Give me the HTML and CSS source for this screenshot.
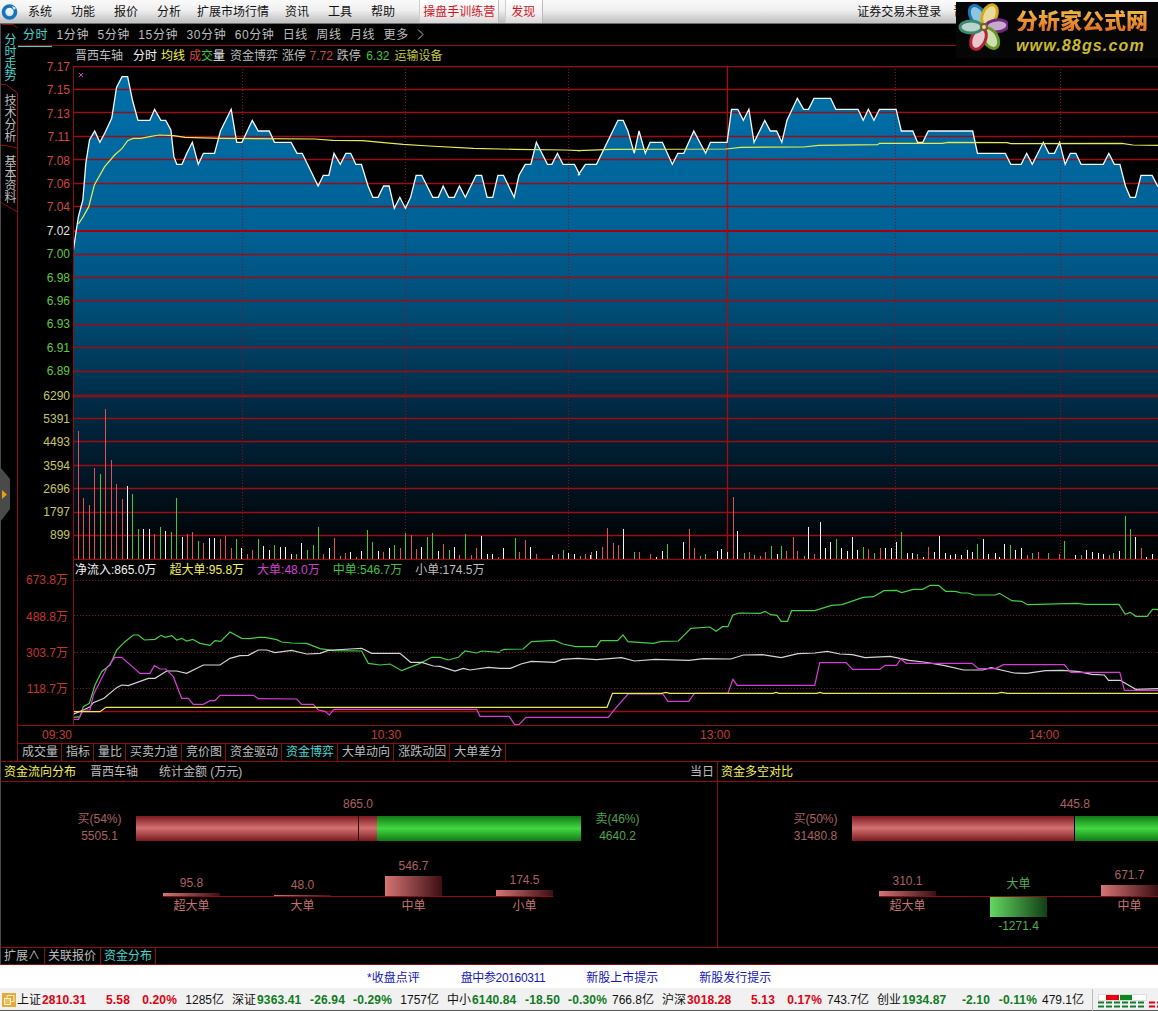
FILE: index.html
```html
<!DOCTYPE html>
<html lang="zh">
<head>
<meta charset="utf-8">
<title>分时走势</title>
<link rel="stylesheet" href="styles.css">
</head>
<body>
<div class="app">
  <header class="menu">
    <svg class="menu-logo" width="17" height="18" viewBox="0 0 17 18"><circle cx="8.5" cy="9" r="6" fill="none" stroke="#1673bd" stroke-width="3.6"/><circle cx="8.5" cy="9" r="2.6" fill="#dff1fb"/><path d="M11 3l4 2-2 2z" fill="#f4f4f4"/></svg>
    <nav class="menu-items">
      <span>系统</span><span>功能</span><span>报价</span><span>分析</span><span class="menu-wide">扩展市场行情</span><span>资讯</span><span>工具</span><span>帮助</span>
    </nav>
    <span class="menu-btn first">操盘手训练营</span>
    <span class="menu-btn second">发现</span>
    <span class="login">证券交易未登录</span>
    <span class="stock-hidden">晋西车轴</span>
    <div class="brand">
      <svg class="brand-flower" width="52" height="56" viewBox="0 0 52 56">
        <g transform="translate(28 25)">
          <ellipse class="pet" rx="7" ry="11" cy="-13" transform="rotate(-30)" fill="#8fc4e0" stroke="#1b76b8"/>
          <ellipse class="pet" rx="7" ry="11" cy="-13" transform="rotate(25)" fill="#e8dc9c" stroke="#d8a81c"/>
          <ellipse class="pet" rx="6" ry="11" cy="-13" transform="rotate(85)" fill="#c8a8cc" stroke="#6d2a7c"/>
          <ellipse class="pet" rx="7" ry="11" cy="-13" transform="rotate(150)" fill="#cfe0b0" stroke="#6a9824"/>
          <ellipse class="pet" rx="7" ry="11" cy="-13" transform="rotate(205)" fill="#e8c8cc" stroke="#b02838"/>
          <ellipse class="pet" rx="6" ry="11" cy="-13" transform="rotate(270)" fill="#b8d4cc" stroke="#3a8a70"/>
          <circle r="4" fill="#7a5a30"/><circle r="2" fill="#e8d8a0"/>
        </g>
      </svg>
      <div class="brand-text">
        <div class="brand-cn">分析家公式网</div>
        <div class="brand-url">www.88gs.com</div>
      </div>
    </div>
  </header>

  <div class="body-row">
    <aside class="sidetabs">
      <svg class="side-lines" width="18" height="737" viewBox="0 0 18 737"><path class="side-path" d="M2 .5H13L17.5 4M1 60.5H6L17.5 69V737M1 121.5H6L17.5 124M1 178.5L17.5 188"/></svg>
      <span class="side-tab on">分时走势</span>
      <span class="side-tab">技术分析</span>
      <span class="side-tab">基本资料</span>
      <svg class="side-handle" width="11" height="56" viewBox="0 0 11 56"><path d="M0 0L10 12V42L0 55z" fill="#4a4a4a"/><path d="M2 23l5 4.500-5 4.500z" fill="#e8a010"/></svg>
    </aside>

    <main class="content">
      <div class="periods">
        <span class="on">分时</span><span>1分钟</span><span>5分钟</span><span>15分钟</span><span>30分钟</span><span>60分钟</span><span>日线</span><span>周线</span><span>月线</span><span>更多</span>
        <svg class="more" width="7" height="11" viewBox="0 0 7 11"><path d="M1 .5L6 5.500 1 10.500" fill="none" stroke="#bdbdbd"/></svg>
      </div>
      <div class="titlebar">
        <span class="t-stock">晋西车轴</span>
        <span class="white">分时</span>
        <span class="yellow">均线</span>
        <span><b class="red">成</b><b class="green">交</b><b class="white">量</b></span>
        <span class="t-cap">资金博弈</span>
        <span>涨停 <b class="red">7.72</b></span>
        <span>跌停 <b class="green t-down">6.32</b></span>
        <span class="olive t-cap">运输设备</span>
      </div>

      <section class="chart-row">
        <div class="axis">
          <div class="axis-list">
            <span class="red">7.17</span><span class="red">7.15</span><span class="red">7.13</span><span class="red">7.11</span><span class="red">7.08</span><span class="red">7.06</span><span class="red">7.04</span><span class="white2">7.02</span><span class="lime">7.00</span><span class="lime">6.98</span><span class="lime">6.96</span><span class="lime">6.93</span><span class="lime">6.91</span><span class="lime">6.89</span>
          </div>
          <div class="axis-vol">
            <span>6290</span><span>5391</span><span>4493</span><span>3594</span><span>2696</span><span>1797</span><span>899</span>
          </div>
        </div>
        <svg class="plot" width="1084" height="494" viewBox="74 66 1084 494">
          <defs>
            <linearGradient id="fillArea" gradientUnits="userSpaceOnUse" x1="0" y1="228" x2="0" y2="1677">
              <stop offset="0" stop-color="#0070a9"/><stop offset=".32" stop-color="#006195"/><stop offset=".5" stop-color="#004a72"/><stop offset=".68" stop-color="#012a44"/><stop offset="1" stop-color="#000"/>
            </linearGradient>
          </defs>
          <g transform="scale(.36990 .33333)">
            <polygon fill="url(#fillArea)" points="197,1677 197,762 205,700 212,650 224,600 232,490 242,420 256,393 270,427 283,400 302,355 315,262 330,230 345,230 358,300 373,361 405,361 418,328 435,361 448,361 462,390 470,470 478,493 492,493 505,460 520,427 536,493 550,460 580,460 596,393 625,328 640,427 654,427 682,361 698,393 728,393 742,427 787,427 803,460 817,460 860,558 874,526 889,526 903,460 920,493 935,460 948,460 962,493 977,493 995,558 1008,592 1022,592 1037,558 1052,558 1066,625 1081,592 1096,625 1110,592 1125,526 1140,526 1170,592 1185,592 1198,558 1213,592 1228,592 1242,558 1258,592 1287,526 1302,526 1317,592 1332,592 1346,526 1361,526 1390,592 1403,526 1420,493 1435,493 1450,427 1480,493 1492,493 1507,460 1522,493 1553,493 1568,526 1568,1677"/>
          </g>
          <g transform="translate(578 0) scale(.36990 .33333)">
            <polygon fill="url(#fillArea)" points="-2,1677 -2,526 0,526 20,493 50,493 108,361 122,361 135,393 152,460 165,393 182,460 195,427 228,427 255,493 270,460 286,460 313,393 345,460 358,427 403,427 415,328 432,328 447,361 462,328 476,427 505,361 520,393 537,393 551,427 565,361 593,295 610,328 623,328 638,295 683,295 697,328 757,328 771,361 785,328 800,361 815,328 860,328 874,393 905,393 918,427 932,427 947,393 1067,393 1080,460 1155,460 1170,493 1198,493 1213,460 1228,493 1258,427 1273,460 1288,460 1302,427 1317,493 1331,460 1346,460 1360,493 1420,493 1435,460 1450,493 1465,493 1480,558 1493,592 1507,592 1522,526 1552,526 1568,560 1568,1677"/>
          </g>
          <path class="grid" d="M74 66.500H1158M74 89.500H1158M74 112.500H1158M74 136.500H1158M74 159.500H1158M74 183.500H1158M74 206.500H1158M74 254.500H1158M74 277.500H1158M74 300.500H1158M74 324.500H1158M74 347.500H1158M74 371.500H1158M74 418.500H1158M74 441.500H1158M74 465.500H1158M74 488.500H1158M74 512.500H1158M74 535.500H1158M74 559.500H1158"/>
          <path class="grid-thick" d="M74 231H1158"/>
          <path class="grid-band" d="M74 396H1158"/>
          <path class="grid-dot" d="M242.500 66V559M405.500 66V559M568.500 66V559M895.500 66V559M1060.500 66V559"/>
          <path class="grid-solid" d="M727.500 66V559"/>
          <g transform="scale(.36990 .33333)">
            <polyline class="l-price" points="197,762 205,700 212,650 224,600 232,490 242,420 256,393 270,427 283,400 302,355 315,262 330,230 345,230 358,300 373,361 405,361 418,328 435,361 448,361 462,390 470,470 478,493 492,493 505,460 520,427 536,493 550,460 580,460 596,393 625,328 640,427 654,427 682,361 698,393 728,393 742,427 787,427 803,460 817,460 860,558 874,526 889,526 903,460 920,493 935,460 948,460 962,493 977,493 995,558 1008,592 1022,592 1037,558 1052,558 1066,625 1081,592 1096,625 1110,592 1125,526 1140,526 1170,592 1185,592 1198,558 1213,592 1228,592 1242,558 1258,592 1287,526 1302,526 1317,592 1332,592 1346,526 1361,526 1390,592 1403,526 1420,493 1435,493 1450,427 1480,493 1492,493 1507,460 1522,493 1553,493 1568,526"/>
            <polyline class="l-avg" points="212,672 225,650 240,620 255,555 283,500 310,465 330,445 345,422 360,415 380,415 405,410 430,405 470,407 500,412 600,415 850,417 900,421 980,422 1030,427 1090,433 1160,438 1280,445 1390,448 1530,450 1568,452"/>
          </g>
          <g transform="translate(578 0) scale(.36990 .33333)">
            <polyline class="l-price" points="0,526 20,493 50,493 108,361 122,361 135,393 152,460 165,393 182,460 195,427 228,427 255,493 270,460 286,460 313,393 345,460 358,427 403,427 415,328 432,328 447,361 462,328 476,427 505,361 520,393 537,393 551,427 565,361 593,295 610,328 623,328 638,295 683,295 697,328 757,328 771,361 785,328 800,361 815,328 860,328 874,393 905,393 918,427 932,427 947,393 1067,393 1080,460 1155,460 1170,493 1198,493 1213,460 1228,493 1258,427 1273,460 1288,460 1302,427 1317,493 1331,460 1346,460 1360,493 1420,493 1435,460 1450,493 1465,493 1480,558 1493,592 1507,592 1522,526 1552,526 1568,560"/>
            <polyline class="l-avg" points="0,452 90,448 400,447 440,442 610,441 650,436 810,434 815,430 985,430 1000,427 1160,428 1170,431 1470,430 1500,435 1568,436"/>
          </g>
          <path class="mark" d="M79 73l4 4M83 73l-4 4"/>
          <path class="v-red" d="M78.500 559V431M83.500 559V498M89.500 559V505M94.500 559V468M105.500 559V409M111.500 559V460M116.500 559V484M122.500 559V499M154.500 559V534M187.500 559V534M192.500 559V532M203.500 559V543M220.500 559V539M225.500 559V536M231.500 559V548M247.500 559V554M252.500 559V550M323.500 559V554M334.500 559V538M345.500 559V553M383.500 559V552M400.500 559V548M411.500 559V535M416.500 559V549M443.500 559V544M459.500 559V555M471.500 559V555M476.500 559V548M498.500 559V557M519.500 559V552M525.500 559V540M536.500 559V554M558.500 559V554M585.500 559V554M591.500 559V552M602.500 559V547M607.500 559V528M613.500 559V543M618.500 559V545M639.500 559V552M650.500 559V554M689.500 559V529M694.500 559V548M733.500 559V497M749.500 559V552M760.500 559V556M765.500 559V552M786.500 559V551M793.500 559V537M797.500 559V551M814.500 559V554M868.500 559V549M880.500 559V548M928.500 559V547M1027.500 559V555M1038.500 559V552M1059.500 559V554M1109.500 559V555M1141.500 559V548"/>
          <path class="v-green" d="M100.500 559V474M132.500 559V494M138.500 559V529M160.500 559V527M171.500 559V532M176.500 559V498M198.500 559V541M236.500 559V539M258.500 559V539M274.500 559V545M296.500 559V554M307.500 559V550M313.500 559V545M318.500 559V527M340.500 559V556M356.500 559V557M367.500 559V530M372.500 559V542M394.500 559V545M405.500 559V533M427.500 559V537M432.500 559V533M449.500 559V550M465.500 559V534M515.500 559V538M563.500 559V550M580.500 559V556M634.500 559V552M667.500 559V544M700.500 559V556M705.500 559V554M744.500 559V553M754.500 559V555M771.500 559V546M781.500 559V546M804.500 559V556M836.500 559V539M863.500 559V547M874.500 559V553M901.500 559V532M917.500 559V554M977.500 559V544M1010.500 559V545M1032.500 559V553M1048.500 559V553M1064.500 559V541M1081.500 559V555M1113.500 559V553M1125.500 559V516M1130.500 559V529"/>
          <path class="v-white" d="M127.500 559V486M143.500 559V529M149.500 559V529M165.500 559V531M182.500 559V537M209.500 559V538M214.500 559V538M241.500 559V548M263.500 559V546M269.500 559V550M280.500 559V547M285.500 559V547M291.500 559V554M301.500 559V543M329.500 559V548M350.500 559V552M361.500 559V551M378.500 559V551M389.500 559V548M421.500 559V547M438.500 559V551M454.500 559V547M481.500 559V536M487.500 559V554M492.500 559V554M503.500 559V548M530.500 559V547M552.500 559V555M568.500 559V553M574.500 559V554M590.500 559V555M596.500 559V551M623.500 559V529M656.500 559V557M662.500 559V551M683.500 559V542M717.500 559V551M721.500 559V549M727.500 559V552M737.500 559V531M777.500 559V554M808.500 559V527M820.500 559V522M825.500 559V548M830.500 559V542M841.500 559V548M847.500 559V551M852.500 559V537M857.500 559V550M885.500 559V548M891.500 559V548M896.500 559V542M907.500 559V553M912.500 559V553M923.500 559V557M934.500 559V552M939.500 559V536M945.500 559V553M950.500 559V555M955.500 559V554M961.500 559V555M967.500 559V550M972.500 559V552M983.500 559V539M988.500 559V554M995.500 559V553M999.500 559V557M1004.500 559V544M1015.500 559V550M1021.500 559V548M1075.500 559V555M1086.500 559V550M1092.500 559V552M1098.500 559V553M1103.500 559V554M1119.500 559V551M1135.500 559V537M1146.500 559V557M1152.500 559V554"/>
        </svg>
      </section>

      <section class="legend-row">
        <div class="axis-empty"></div>
        <div class="legend">
          <span class="white">净流入:865.0万</span>
          <span class="yellow">超大单:95.8万</span>
          <span class="magenta">大单:48.0万</span>
          <span class="green">中单:546.7万</span>
          <span>小单:174.5万</span>
        </div>
      </section>

      <section class="flow-row">
        <div class="axis">
          <div class="axis-flow"><span>673.8万</span><span>488.8万</span><span>303.7万</span><span>118.7万</span></div>
        </div>
        <svg class="plot" width="1084" height="147" viewBox="74 578 1084 147">
          <path class="flow-dot" d="M74 580.500H1158M74 615.500H1158M74 652.500H1158M74 688.500H1158"/>
          <path class="grid" d="M74 711.500H1158"/>
          <g transform="translate(0 570) scale(.33333)">
            <polyline class="f-green" points="222,442 240,440 250,410 268,400 285,345 305,305 330,285 350,240 375,215 400,195 415,195 433,210 465,208 483,196 495,202 515,197 530,210 545,205 560,213 578,208 600,220 630,226 645,212 662,214 690,186 725,205 750,206 775,202 795,202 830,209 845,216 875,219 920,220 960,236 1000,242 1085,243 1105,280 1140,285 1170,282 1205,302 1260,280 1295,262 1320,262 1345,270 1375,262 1395,243 1430,249 1445,243 1500,247"/>
            <polyline class="f-white" points="222,432 250,420 270,410 280,398 312,385 350,353 365,345 385,347 445,325 465,325 500,303 530,303 560,310 610,285 660,285 690,265 720,257 745,256 775,240 800,240 825,248 875,241 920,252 960,250 985,241 1050,237 1085,235 1115,250 1200,250 1232,277 1265,277 1300,288 1320,289 1365,303 1390,295 1410,300 1465,292 1500,295"/>
            <polyline class="f-mag" points="222,448 235,448 250,420 270,420 280,375 320,295 345,262 365,262 420,310 450,310 463,287 480,297 497,297 520,320 545,385 565,385 580,403 610,403 630,392 645,392 660,376 760,376 775,386 890,387 905,403 940,403 955,420 975,424 988,435 1002,418 1430,418 1440,439 1500,439"/>
            <polyline class="f-yellow" points="222,425 300,425 318,412 1500,412"/>
          </g>
          <g transform="translate(500 570) scale(.41964 .33333)">
            <polyline class="f-green" points="0,243 10,238 55,237 75,215 130,211 150,222 180,230 230,230 240,212 280,212 293,195 305,215 365,220 385,214 425,213 455,175 500,171 515,184 530,170 543,170 555,135 570,129 620,130 632,124 645,134 660,136 670,154 685,154 695,122 750,122 790,106 815,104 865,82 890,80 915,62 945,61 957,68 985,58 1007,58 1025,46 1045,46 1062,64 1085,64 1100,69 1115,69 1130,75 1180,75 1190,70 1220,92 1243,94 1257,104 1375,100 1395,103 1475,103 1490,133 1502,127 1515,139 1542,139 1555,118 1568,118"/>
            <polyline class="f-white" points="0,295 25,295 50,282 75,274 130,277 148,268 185,265 230,269 290,263 320,273 370,268 450,271 485,266 550,267 580,255 625,254 670,263 710,251 750,249 780,244 810,252 840,254 870,263 930,259 975,271 1010,276 1060,287 1105,300 1150,300 1170,293 1225,309 1255,310 1300,302 1340,301 1380,305 1410,313 1440,315 1450,331 1478,331 1515,358 1568,356"/>
            <polyline class="f-mag" points="0,439 22,439 35,464 45,464 62,442 258,442 275,415 305,372 388,372 400,394 450,394 463,370 543,370 555,328 565,346 750,346 762,278 825,278 840,298 905,298 918,286 945,286 955,267 968,280 1125,280 1140,296 1180,296 1200,284 1345,284 1360,307 1477,307 1488,361 1568,361"/>
            <polyline class="f-yellow" points="0,412 255,412 268,370 385,370 395,367 405,370 650,370 658,367 665,370 755,370 762,367 770,370 1185,370 1195,367 1210,370 1568,370"/>
          </g>
        </svg>
      </section>

      <div class="times"><span>09:30</span><span>10:30</span><span>13:00</span><span>14:00</span></div>

      <div class="subtabs">
        <span>成交量</span><span>指标</span><span>量比</span><span>买卖力道</span><span>竞价图</span><span>资金驱动</span><span class="on">资金博弈</span><span>大单动向</span><span>涨跌动因</span><span>大单差分</span>
      </div>
    </main>
  </div>

  <section class="panes">
    <article class="pane pane-left">
      <div class="pane-head">
        <span class="yellow">资金流向分布</span>
        <span class="ph-stock">晋西车轴</span>
        <span class="ph-stat">统计金额 (万元)</span>
        <span class="ph-day">当日</span>
      </div>
      <div class="gauge">
        <div class="g-side rose g-buy"><div>买(54%)</div><div>5505.1</div></div>
        <div class="g-main">
          <div class="g-val rose g-val-a">865.0</div>
          <div class="g-bar"><i class="seg-red seg-a"></i><i class="seg-red seg-b"></i><i class="seg-green"></i></div>
        </div>
        <div class="g-side g-sell"><div>卖(46%)</div><div>4640.2</div></div>
      </div>
      <div class="mini mini-a">
        <div class="mini-up">
          <div class="m-col"><span class="m-v rose">95.8</span><i class="m-bar m-red" style="height:3px"></i></div>
          <div class="m-col"><span class="m-v rose">48.0</span><i class="m-bar m-red" style="height:1px"></i></div>
          <div class="m-col"><span class="m-v rose">546.7</span><i class="m-bar m-red" style="height:20px"></i></div>
          <div class="m-col"><span class="m-v rose">174.5</span><i class="m-bar m-red" style="height:6px"></i></div>
        </div>
        <div class="mini-down">
          <div class="m-col"><span class="m-l pink">超大单</span></div>
          <div class="m-col"><span class="m-l pink">大单</span></div>
          <div class="m-col"><span class="m-l pink">中单</span></div>
          <div class="m-col"><span class="m-l pink">小单</span></div>
        </div>
      </div>
    </article>
    <article class="pane pane-right">
      <div class="pane-head"><span class="yellow">资金多空对比</span></div>
      <div class="gauge gauge-r">
        <div class="g-side rose g-buy"><div>买(50%)</div><div>31480.8</div></div>
        <div class="g-main">
          <div class="g-val rose g-val-b">445.8</div>
          <div class="g-bar"><i class="seg-red seg-c"></i><i class="seg-green"></i></div>
        </div>
      </div>
      <div class="mini mini-b">
        <div class="mini-up">
          <div class="m-col"><span class="m-v rose">310.1</span><i class="m-bar m-red" style="height:5px"></i></div>
          <div class="m-col"><span class="m-l sage">大单</span></div>
          <div class="m-col"><span class="m-v rose">671.7</span><i class="m-bar m-red" style="height:11px"></i></div>
        </div>
        <div class="mini-down">
          <div class="m-col"><span class="m-l pink">超大单</span></div>
          <div class="m-col"><i class="m-bar m-green" style="height:20px"></i><span class="m-l sage">-1271.4</span></div>
          <div class="m-col"><span class="m-l pink">中单</span></div>
        </div>
      </div>
    </article>
  </section>

  <div class="exttabs"><span>扩展∧</span><span>关联报价</span><span class="on">资金分布</span></div>

  <div class="links"><span>*收盘点评</span><span class="tight">盘中参20160311</span><span>新股上市提示</span><span>新股发行提示</span></div>

  <footer class="status">
    <svg class="st-icon" width="14" height="14" viewBox="0 0 14 14"><rect width="14" height="14" fill="#e9a93a"/><rect x="5" y="2.500" width="7" height="6" fill="none" stroke="#fff3cf"/><rect x="2.500" y="5.500" width="6" height="6" fill="#f0c060" stroke="#fff3cf"/></svg>
    <div class="idx"><span class="i-n">上证</span><b class="i-p up">2810.31</b><b class="i-c up">5.58</b><b class="i-r up">0.20%</b><span class="i-a">1285亿</span></div>
    <div class="idx"><span class="i-n">深证</span><b class="i-p dn">9363.41</b><b class="i-c dn">-26.94</b><b class="i-r dn">-0.29%</b><span class="i-a">1757亿</span></div>
    <div class="idx"><span class="i-n">中小</span><b class="i-p dn">6140.84</b><b class="i-c dn">-18.50</b><b class="i-r dn">-0.30%</b><span class="i-a">766.8亿</span></div>
    <div class="idx"><span class="i-n">沪深</span><b class="i-p up">3018.28</b><b class="i-c up">5.13</b><b class="i-r up">0.17%</b><span class="i-a">743.7亿</span></div>
    <div class="idx"><span class="i-n">创业</span><b class="i-p dn">1934.87</b><b class="i-c dn">-2.10</b><b class="i-r dn">-0.11%</b><span class="i-a">479.1亿</span></div>
    <svg class="st-bars" width="66" height="22" viewBox="0 0 66 22"><path d="M.5 0V22" stroke="#bbb" fill="none"/><rect x="6.500" y="5.500" width="48" height="6" fill="#fff" stroke="#ddd"/><rect x="14" y="6" width="13" height="5" fill="#e60012"/><rect x="28" y="6" width="12" height="5" fill="#0a8a1e"/><path d="M6 13.500H54M6 17.500H54" stroke="#127a2a" stroke-width="2" stroke-dasharray="6 2" fill="none"/><path d="M57 13.500H66M57 17.500H66" stroke="#e60012" stroke-width="2" stroke-dasharray="6 2" fill="none"/></svg>
  </footer>
</div>
</body>
</html>
```

FILE: styles.css
```css
* { box-sizing: border-box; }
html, body { margin: 0; padding: 0; background: #000; }
.app {
  width: 1158px; height: 1011px; overflow: hidden; position: relative;
  font: 12px/1 "Liberation Sans", "Noto Sans CJK SC", sans-serif;
  color: #bdbdbd; background: #000;
}
b, i { font-weight: normal; font-style: normal; }
.red { color: #d24444; }
.green { color: #3fc43f; }
.white { color: #f2f2f2; }
.white2 { color: #e0e0e0; }
.yellow { color: #f2f24a; }
.olive { color: #c0c83a; }
.lime { color: #62c83c; }
.magenta { color: #d83cd8; }
.rose { color: #ac6060; }
.pink { color: #c87272; }
.sage { color: #4fae4f; }

/* menu */
.menu {
  position: relative; height: 24px; display: flex; align-items: center; color: #111;
  background: linear-gradient(#fafafa, #efefef 45%, #c4c4c4 92%);
  border-bottom: 1px solid #6e6e6e; padding-left: 1px;
}
.menu-logo { flex: none; }
.menu-items { display: flex; gap: 19px; margin-left: 10px; }
.menu-wide { margin: 0 -3px; }
.menu-btn { height: 23px; display: flex; align-items: center; color: #d8141e; background: linear-gradient(#fff, #f0f0f0 60%, #d8d8d8); border-left: 1px solid #cfcfcf; border-right: 1px solid #bbb; }
.menu-btn.first { margin-left: 24px; padding: 0 3px; }
.menu-btn.second { margin-left: 6px; padding: 0 7px 0 5px; }
.login { margin-left: 314px; }
.stock-hidden { margin-left: 12px; white-space: nowrap; }
.brand {
  position: absolute; left: 956px; top: 2px; width: 202px; height: 56px;
  background: #060606; display: flex; z-index: 3;
}
.brand-flower { flex: none; }
.pet { stroke-width: 3; }
.brand-text { margin: 5px 0 0 8px; }
.brand-cn {
  font: 900 22px/24px "Noto Sans CJK SC", sans-serif; white-space: nowrap;
  background: linear-gradient(#f3c34a, #df6f22); -webkit-background-clip: text; background-clip: text; color: transparent;
}
.brand-url { margin-top: 6px; font: italic 700 16px/18px "Liberation Sans", sans-serif; letter-spacing: 1.150px; color: #c9bb2a; }

/* side tabs */
.body-row { display: flex; height: 737px; }
.sidetabs { position: relative; flex: none; width: 18px; display: flex; flex-direction: column; gap: 13px; padding: 9px 0 0 2px; border-left: 1px solid #4a4a4a; }
.side-lines { position: absolute; left: -1px; top: 0; }
.side-path { fill: none; stroke: #8f0d12; }
.side-tab { position: relative; writing-mode: vertical-rl; line-height: 12px; letter-spacing: 0; width: 12px; }
.side-tab.on { color: #3fd8d0; }
.side-handle { position: absolute; left: -1px; top: 443px; }

/* right content */
.content { flex: 1; min-width: 0; }
.periods { height: 22px; display: flex; align-items: center; gap: 8.400px; padding-left: 5px; letter-spacing: .6px; border-bottom: 1px solid #8f0d12; position: relative; }
.periods .on { color: #3fd8d0; position: relative; }
.periods .on::after { content: ""; position: absolute; left: -5px; right: -4px; bottom: -6px; height: 1px; background: #3fd8d0; }
.more { flex: none; }
.titlebar { height: 20px; display: flex; align-items: center; gap: 4px; padding-left: 57px; white-space: nowrap; }
.t-stock { margin-right: 6px; }
.t-cap { margin-left: 1px; }
.t-down { margin-left: 2px; }
.chart-row, .flow-row { display: flex; }
.chart-row { height: 494px; }
.axis { flex: none; width: 56px; border-right: 1px solid #8f0d12; text-align: right; padding-right: 3px; }
.axis span { display: block; }
.axis-list { margin-top: -10px; }
.axis-list span { height: 23.400px; line-height: 23.400px; }
.axis-vol { margin-top: 1.500px; color: #c6c65a; }
.axis-vol span { height: 23.200px; line-height: 23.200px; }
.plot { display: block; flex: none; }
.grid { fill: none; stroke: #9c0c12; stroke-width: 1.300; }
.grid-thick { fill: none; stroke: #a80008; stroke-width: 2.200; }
.grid-band { fill: none; stroke: #7c151c; stroke-width: 3; }
.grid-dot { fill: none; stroke: #8a1015; stroke-width: 1; stroke-dasharray: 1 2; }
.grid-solid { fill: none; stroke: #a80a10; stroke-width: 1.300; }
.l-price { fill: none; stroke: #f4f8fa; stroke-width: 1.300; vector-effect: non-scaling-stroke; }
.l-avg { fill: none; stroke: #e6ea50; stroke-width: 1.200; vector-effect: non-scaling-stroke; }
.mark { fill: none; stroke: #d83cd8; stroke-width: 1; }
.v-red, .v-green, .v-white { fill: none; stroke-width: 1; }
.v-red { stroke: #e05252; }
.v-green { stroke: #3cc83c; }
.v-white { stroke: #f4f4f4; }

.legend-row { display: flex; height: 18px; }
.axis-empty { flex: none; width: 56px; border-right: 1px solid #8f0d12; }
.legend { display: flex; align-items: center; gap: 13px; padding: 1px 0 0 1px; white-space: nowrap; }

.flow-row { height: 148px; border-bottom: 1px solid #900c12; }
.axis-flow { margin-top: -15.700px; color: #c83434; padding-right: 2px; }
.axis-flow span { height: 36.400px; line-height: 36.400px; }
.flow-dot { fill: none; stroke: #7e1217; stroke-dasharray: 1 2; }
.f-green, .f-white, .f-mag, .f-yellow { fill: none; stroke-width: 1.200; vector-effect: non-scaling-stroke; }
.f-green { stroke: #45d045; }
.f-white { stroke: #d4d4d4; }
.f-mag { stroke: #d83cd8; }
.f-yellow { stroke: #eaea50; }

.times { height: 17px; display: flex; align-items: center; gap: 299px; padding-left: 24px; color: #c83a3a; }

.subtabs { height: 18px; display: flex; border-top: 1px solid #900c12; }
.subtabs span { padding: 0 3px 0 4px; border-right: 1px solid #900c12; line-height: 17px; white-space: nowrap; }
.subtabs .on { color: #3fd8d0; }

/* panes */
.panes { display: flex; height: 186px; border-top: 1px solid #900c12; border-left: 1px solid #4a4a4a; }
.pane { overflow: hidden; }
.pane-left { flex: none; width: 717px; border-right: 1px solid #900c12; }
.pane-right { flex: 1; min-width: 0; }
.pane-head { height: 20px; border-bottom: 1px solid #900c12; display: flex; align-items: center; padding: 0 3px; white-space: nowrap; }
.ph-stock { margin-left: 14px; }
.ph-stat { margin-left: 21px; }
.ph-day { margin-left: auto; }
.gauge { display: flex; height: 46px; margin-top: 14px; padding-left: 76px; }
.gauge-r { padding-left: 75px; }
.g-side { flex: none; width: 45px; padding-top: 15px; text-align: center; white-space: nowrap; line-height: 17px; }
.g-sell { color: #4fa44f; margin-left: 14px; }
.g-main { flex: none; width: 445px; margin-left: 14px; }
.g-val { height: 20px; line-height: 16px; }
.g-val-a { margin-left: 207px; }
.g-val-b { margin-left: 208px; }
.g-bar { display: flex; height: 25px; }
.seg-red { display: block; background: linear-gradient(#7a1a20, #d47070 48%, #7a1a20); }
.seg-a { width: 223px; border-right: 1px solid #200; }
.seg-b { width: 18px; }
.seg-c { width: 223px; border-right: 1px solid #000; }
.seg-green { display: block; flex: 1; background: linear-gradient(#107a14, #42d842 50%, #107a14); }
.mini { margin-top: 7px; }
.mini-a { margin-left: 162px; width: 390px; }
.mini-b { margin-left: 161px; width: 280px; }
.mini-up { display: flex; gap: 54px; height: 48px; align-items: flex-end; border-bottom: 1px solid #900c12; }
.mini-b .mini-up { width: 300px; }
.mini-down { display: flex; gap: 54px; align-items: flex-start; }
.m-col { flex: none; width: 57px; display: flex; flex-direction: column; align-items: center; white-space: nowrap; }
.m-v { height: 14px; line-height: 14px; margin-bottom: 3px; }
.m-bar { display: block; width: 57px; }
.m-red { background: linear-gradient(90deg, #d67474, #3c0e12); }
.m-green { background: linear-gradient(90deg, #62d862, #123e14); }
.m-l { line-height: 18px; }
.mini-up .m-l { margin-bottom: 3px; }

/* bottom */
.exttabs { height: 18px; display: flex; border-top: 1px solid #900c12; border-bottom: 1px solid #900c12; border-left: 1px solid #4a4a4a; }
.exttabs span { padding: 0 4px 0 3px; border-right: 1px solid #900c12; line-height: 17px; }
.exttabs .on { color: #3fd8d0; padding: 0 3px; }
.links { height: 23px; background: #fff; color: #1414c8; display: flex; align-items: center; gap: 41px; padding: 2px 0 0 367px; white-space: nowrap; }
.tight { letter-spacing: -.35px; }
.status { height: 23px; background: #f1f1f1; display: flex; align-items: center; color: #111; padding: 1px 0 0 2px; border-bottom: 1px solid #555; }
.st-icon { flex: none; margin-right: 1px; }
.idx { flex: none; width: 215px; display: flex; white-space: nowrap; align-items: center; }
.i-n { width: 25px; }
.i-p { width: 47px; font-weight: 700; letter-spacing: .15px; }
.i-c { width: 41px; text-align: right; font-weight: 700; letter-spacing: .15px; }
.i-r { width: 47px; text-align: right; font-weight: 700; letter-spacing: .15px; }
.i-a { width: 47px; text-align: right; }
.up { color: #e60012; }
.dn { color: #0e7c22; }
.st-bars { flex: none; }
```
